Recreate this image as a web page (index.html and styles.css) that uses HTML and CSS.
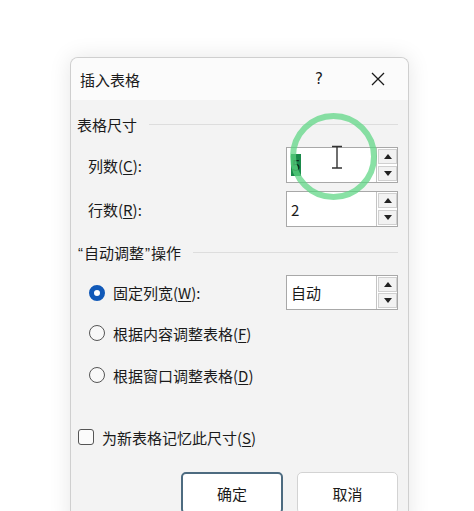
FILE: index.html
```html
<!DOCTYPE html>
<html lang="zh">
<head>
<meta charset="utf-8">
<title>插入表格</title>
<link rel="stylesheet" href="styles.css">
</head>
<body>
<div class="dialog">
  <div class="titlebar">
    <span class="title">插入表格</span>
    <span class="help">?</span>
    <span class="close">
      <svg width="14" height="14" viewBox="0 0 14 14"><path d="M1 1 L13 13 M13 1 L1 13" stroke="#1a1a1a" stroke-width="1.3" fill="none"/></svg>
    </span>
  </div>
  <div class="body">
    <div class="group-head">表格尺寸</div>
    <div class="field-row first">
      <span class="label">列数(<u>C</u>):</span>
      <div class="spin">
        <div class="spin-text"><span class="sel">5</span></div>
        <div class="spin-btns">
          <span class="sbtn"><svg width="8" height="5" viewBox="0 0 8 5"><path d="M0 5 L4 0 L8 5Z" fill="#222"/></svg></span>
          <span class="sbtn"><svg width="8" height="5" viewBox="0 0 8 5"><path d="M0 0 L4 5 L8 0Z" fill="#222"/></svg></span>
        </div>
      </div>
    </div>
    <div class="field-row second">
      <span class="label">行数(<u>R</u>):</span>
      <div class="spin">
        <div class="spin-text">2</div>
        <div class="spin-btns">
          <span class="sbtn"><svg width="8" height="5" viewBox="0 0 8 5"><path d="M0 5 L4 0 L8 5Z" fill="#222"/></svg></span>
          <span class="sbtn"><svg width="8" height="5" viewBox="0 0 8 5"><path d="M0 0 L4 5 L8 0Z" fill="#222"/></svg></span>
        </div>
      </div>
    </div>

    <div class="group-head second-group"><span class="q">“</span>自动调整<span class="q">”</span>操作</div>
    <div class="radio-row r1">
      <span class="radio-label"><span class="radio checked"></span>固定列宽(<u>W</u>):</span>
      <div class="spin">
        <div class="spin-text">自动</div>
        <div class="spin-btns">
          <span class="sbtn"><svg width="8" height="5" viewBox="0 0 8 5"><path d="M0 5 L4 0 L8 5Z" fill="#222"/></svg></span>
          <span class="sbtn"><svg width="8" height="5" viewBox="0 0 8 5"><path d="M0 0 L4 5 L8 0Z" fill="#222"/></svg></span>
        </div>
      </div>
    </div>
    <div class="radio-row r2">
      <span class="radio-label"><span class="radio"></span>根据内容调整表格(<u>F</u>)</span>
    </div>
    <div class="radio-row r3">
      <span class="radio-label"><span class="radio"></span>根据窗口调整表格(<u>D</u>)</span>
    </div>

    <div class="check-row">
      <span class="checkbox"></span>为新表格记忆此尺寸(<u>S</u>)
    </div>

    <div class="buttons">
      <span class="btn default">确定</span>
      <span class="btn cancel">取消</span>
    </div>
  </div>
</div>

<svg class="highlight" width="474" height="511" viewBox="0 0 474 511">
  <circle cx="333.5" cy="156.5" r="40.5" fill="none" stroke="#5bd682" stroke-opacity="0.72" stroke-width="6"/>
  <path d="M332 146.5 H342 M337 146.5 V168 M332 168 H342" stroke="#333" stroke-width="1.4" fill="none"/>
</svg>
</body>
</html>
```
FILE: styles.css
```css
html, body {
  margin: 0;
  padding: 0;
  background: #ffffff;
  overflow: hidden;
}
body {
  width: 474px;
  height: 511px;
  font-family: "Noto Sans CJK SC", "Noto Sans", sans-serif;
  font-size: 15px;
  color: #1a1a1a;
  position: relative;
}
u { text-decoration-thickness: 1px; text-underline-offset: 2px; }

.dialog {
  margin: 57px 0 0 70px;
  width: 337px;
  height: 470px;
  border: 1px solid #cfcfcf;
  border-bottom: none;
  border-radius: 8px 8px 0 0;
  box-shadow: 0 0 22px rgba(0, 0, 0, 0.10);
  overflow: hidden;
  background: #f3f3f3;
}

.titlebar {
  height: 42px;
  background: #fbfbfb;
  display: flex;
  align-items: center;
  padding-left: 9px;
}
.title { flex: 1; line-height: 1; }
.help {
  width: 20px;
  text-align: center;
  font-family: "DejaVu Sans", sans-serif;
  font-size: 15px;
  margin-right: 42px;
}
.close {
  width: 14px;
  height: 14px;
  margin-right: 23px;
  display: flex;
}

.body {
  padding: 13px 10px 0 6px;
}

.group-head {
  height: 22px;
  display: flex;
  align-items: center;
  line-height: 1;
}
.group-head::after {
  content: "";
  flex: 1;
  height: 1px;
  background: #dddddd;
  margin-left: 12px;
}
.second-group { margin-top: 14px; }
.q {
  font-family: "Liberation Sans", sans-serif;
  margin: 0 1px;
}

.field-row {
  height: 36px;
  display: flex;
  align-items: center;
  justify-content: space-between;
}
.field-row.first { margin-top: 12px; }
.field-row.second { margin-top: 8px; }
.label { margin-left: 11px; }

.spin {
  width: 110px;
  height: 34px;
  border: 1px solid #a8a8a8;
  background: #ffffff;
  display: flex;
}
.spin-text {
  flex: 1;
  border-right: 1px solid #c4c4c4;
  display: flex;
  align-items: center;
  padding-left: 4px;
}
.sel {
  background: #1a8a4a;
  color: #0a2e17;
  padding: 2px 1px;
  line-height: 1.2;
}
.spin-btns {
  width: 19px;
  margin-left: 1px;
  display: flex;
  flex-direction: column;
  justify-content: space-between;
  padding: 1px 0;
}
.sbtn {
  height: 15px;
  background: #f2f2f2;
  border: 1px solid #d0d0d0;
  box-sizing: border-box;
  display: flex;
  align-items: center;
  justify-content: center;
}

.radio-row {
  display: flex;
  align-items: center;
  justify-content: space-between;
  height: 22px;
}
.radio-row.r1 { height: 35px; margin-top: 12px; }
.radio-row.r1 .spin { height: 33px; }
.radio-row.r2 { margin-top: 12px; }
.radio-row.r3 { margin-top: 20px; }
.radio-label {
  display: flex;
  align-items: center;
  margin-left: 12px;
}
.radio {
  width: 16px;
  height: 16px;
  box-sizing: border-box;
  border: 1.5px solid #555555;
  border-radius: 50%;
  background: #f8f8f8;
  margin-right: 8px;
}
.radio.checked {
  border: 5px solid #1159b8;
  background: #ffffff;
}

.check-row {
  display: flex;
  align-items: center;
  height: 22px;
  margin-top: 40px;
}
.checkbox {
  width: 16px;
  height: 16px;
  box-sizing: border-box;
  border: 1.5px solid #555555;
  border-radius: 3px;
  background: #fbfbfb;
  margin: 0 8px 0 1px;
}

.buttons {
  display: flex;
  justify-content: flex-end;
  gap: 14px;
  margin-top: 24px;
}
.btn {
  width: 101px;
  height: 42px;
  box-sizing: border-box;
  background: #ffffff;
  border-radius: 5px;
  display: flex;
  align-items: center;
  justify-content: center;
}
.btn.default {
  width: 102px;
  border: 2px solid #4d6b80;
}
.btn.cancel {
  border: 1px solid #d3d3d3;
}

.highlight {
  position: absolute;
  left: 0;
  top: 0;
  pointer-events: none;
}
```
